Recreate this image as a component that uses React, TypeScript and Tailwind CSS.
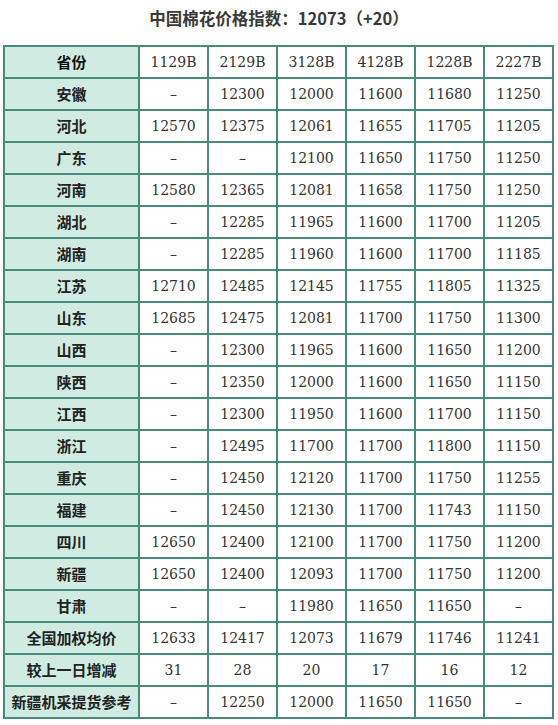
const headers = ["1129B", "2129B", "3128B", "4128B", "1228B", "2227B"];

const rows: [string, string[]][] = [
  ["安徽", ["–", "12300", "12000", "11600", "11680", "11250"]],
  ["河北", ["12570", "12375", "12061", "11655", "11705", "11205"]],
  ["广东", ["–", "–", "12100", "11650", "11750", "11250"]],
  ["河南", ["12580", "12365", "12081", "11658", "11750", "11250"]],
  ["湖北", ["–", "12285", "11965", "11600", "11700", "11205"]],
  ["湖南", ["–", "12285", "11960", "11600", "11700", "11185"]],
  ["江苏", ["12710", "12485", "12145", "11755", "11805", "11325"]],
  ["山东", ["12685", "12475", "12081", "11700", "11750", "11300"]],
  ["山西", ["–", "12300", "11965", "11600", "11650", "11200"]],
  ["陕西", ["–", "12350", "12000", "11600", "11650", "11150"]],
  ["江西", ["–", "12300", "11950", "11600", "11700", "11150"]],
  ["浙江", ["–", "12495", "11700", "11700", "11800", "11150"]],
  ["重庆", ["–", "12450", "12120", "11700", "11750", "11255"]],
  ["福建", ["–", "12450", "12130", "11700", "11743", "11150"]],
  ["四川", ["12650", "12400", "12100", "11700", "11750", "11200"]],
  ["新疆", ["12650", "12400", "12093", "11700", "11750", "11200"]],
  ["甘肃", ["–", "–", "11980", "11650", "11650", "–"]],
  ["全国加权均价", ["12633", "12417", "12073", "11679", "11746", "11241"]],
  ["较上一日增减", ["31", "28", "20", "17", "16", "12"]],
  ["新疆机采提货参考", ["–", "12250", "12000", "11650", "11650", "–"]],
];

const cjk = "font-['Noto_Sans_CJK_SC',sans-serif]";
const num = "font-['DejaVu_Serif','Noto_Sans_CJK_SC',serif]";

export default function App() {
  return (
    <div className="w-[558px] h-[725px] bg-white">
      <h1
        className={`pt-[6px] h-[45px] text-center text-[16.5px] font-bold text-[#3a3a3a] ${cjk}`}
      >
        中国棉花价格指数：12073（+20）
      </h1>
      <table className="ml-[3px] border-collapse">
        <thead>
          <tr>
            <th
              className={`w-[135px] h-[32px] border-2 border-[#4a8a7a] bg-[#d0ebe2] text-[15px] font-bold text-[#111] ${cjk}`}
            >
              省份
            </th>
            {headers.map((h) => (
              <th
                key={h}
                className={`w-[69px] h-[32px] border-2 border-[#4a8a7a] text-[14px] font-normal text-[#333] ${num}`}
              >
                {h}
              </th>
            ))}
          </tr>
        </thead>
        <tbody>
          {rows.map(([name, vals]) => (
            <tr key={name}>
              <td
                className={`h-[32px] border-2 border-[#4a8a7a] bg-[#d0ebe2] text-center text-[15px] font-bold whitespace-nowrap text-[#222] ${cjk}`}
              >
                {name}
              </td>
              {vals.map((v, i) => (
                <td
                  key={i}
                  className={`h-[32px] border-2 border-[#4a8a7a] text-center text-[14px] text-[#333] ${num}`}
                >
                  {v}
                </td>
              ))}
            </tr>
          ))}
        </tbody>
      </table>
    </div>
  );
}
